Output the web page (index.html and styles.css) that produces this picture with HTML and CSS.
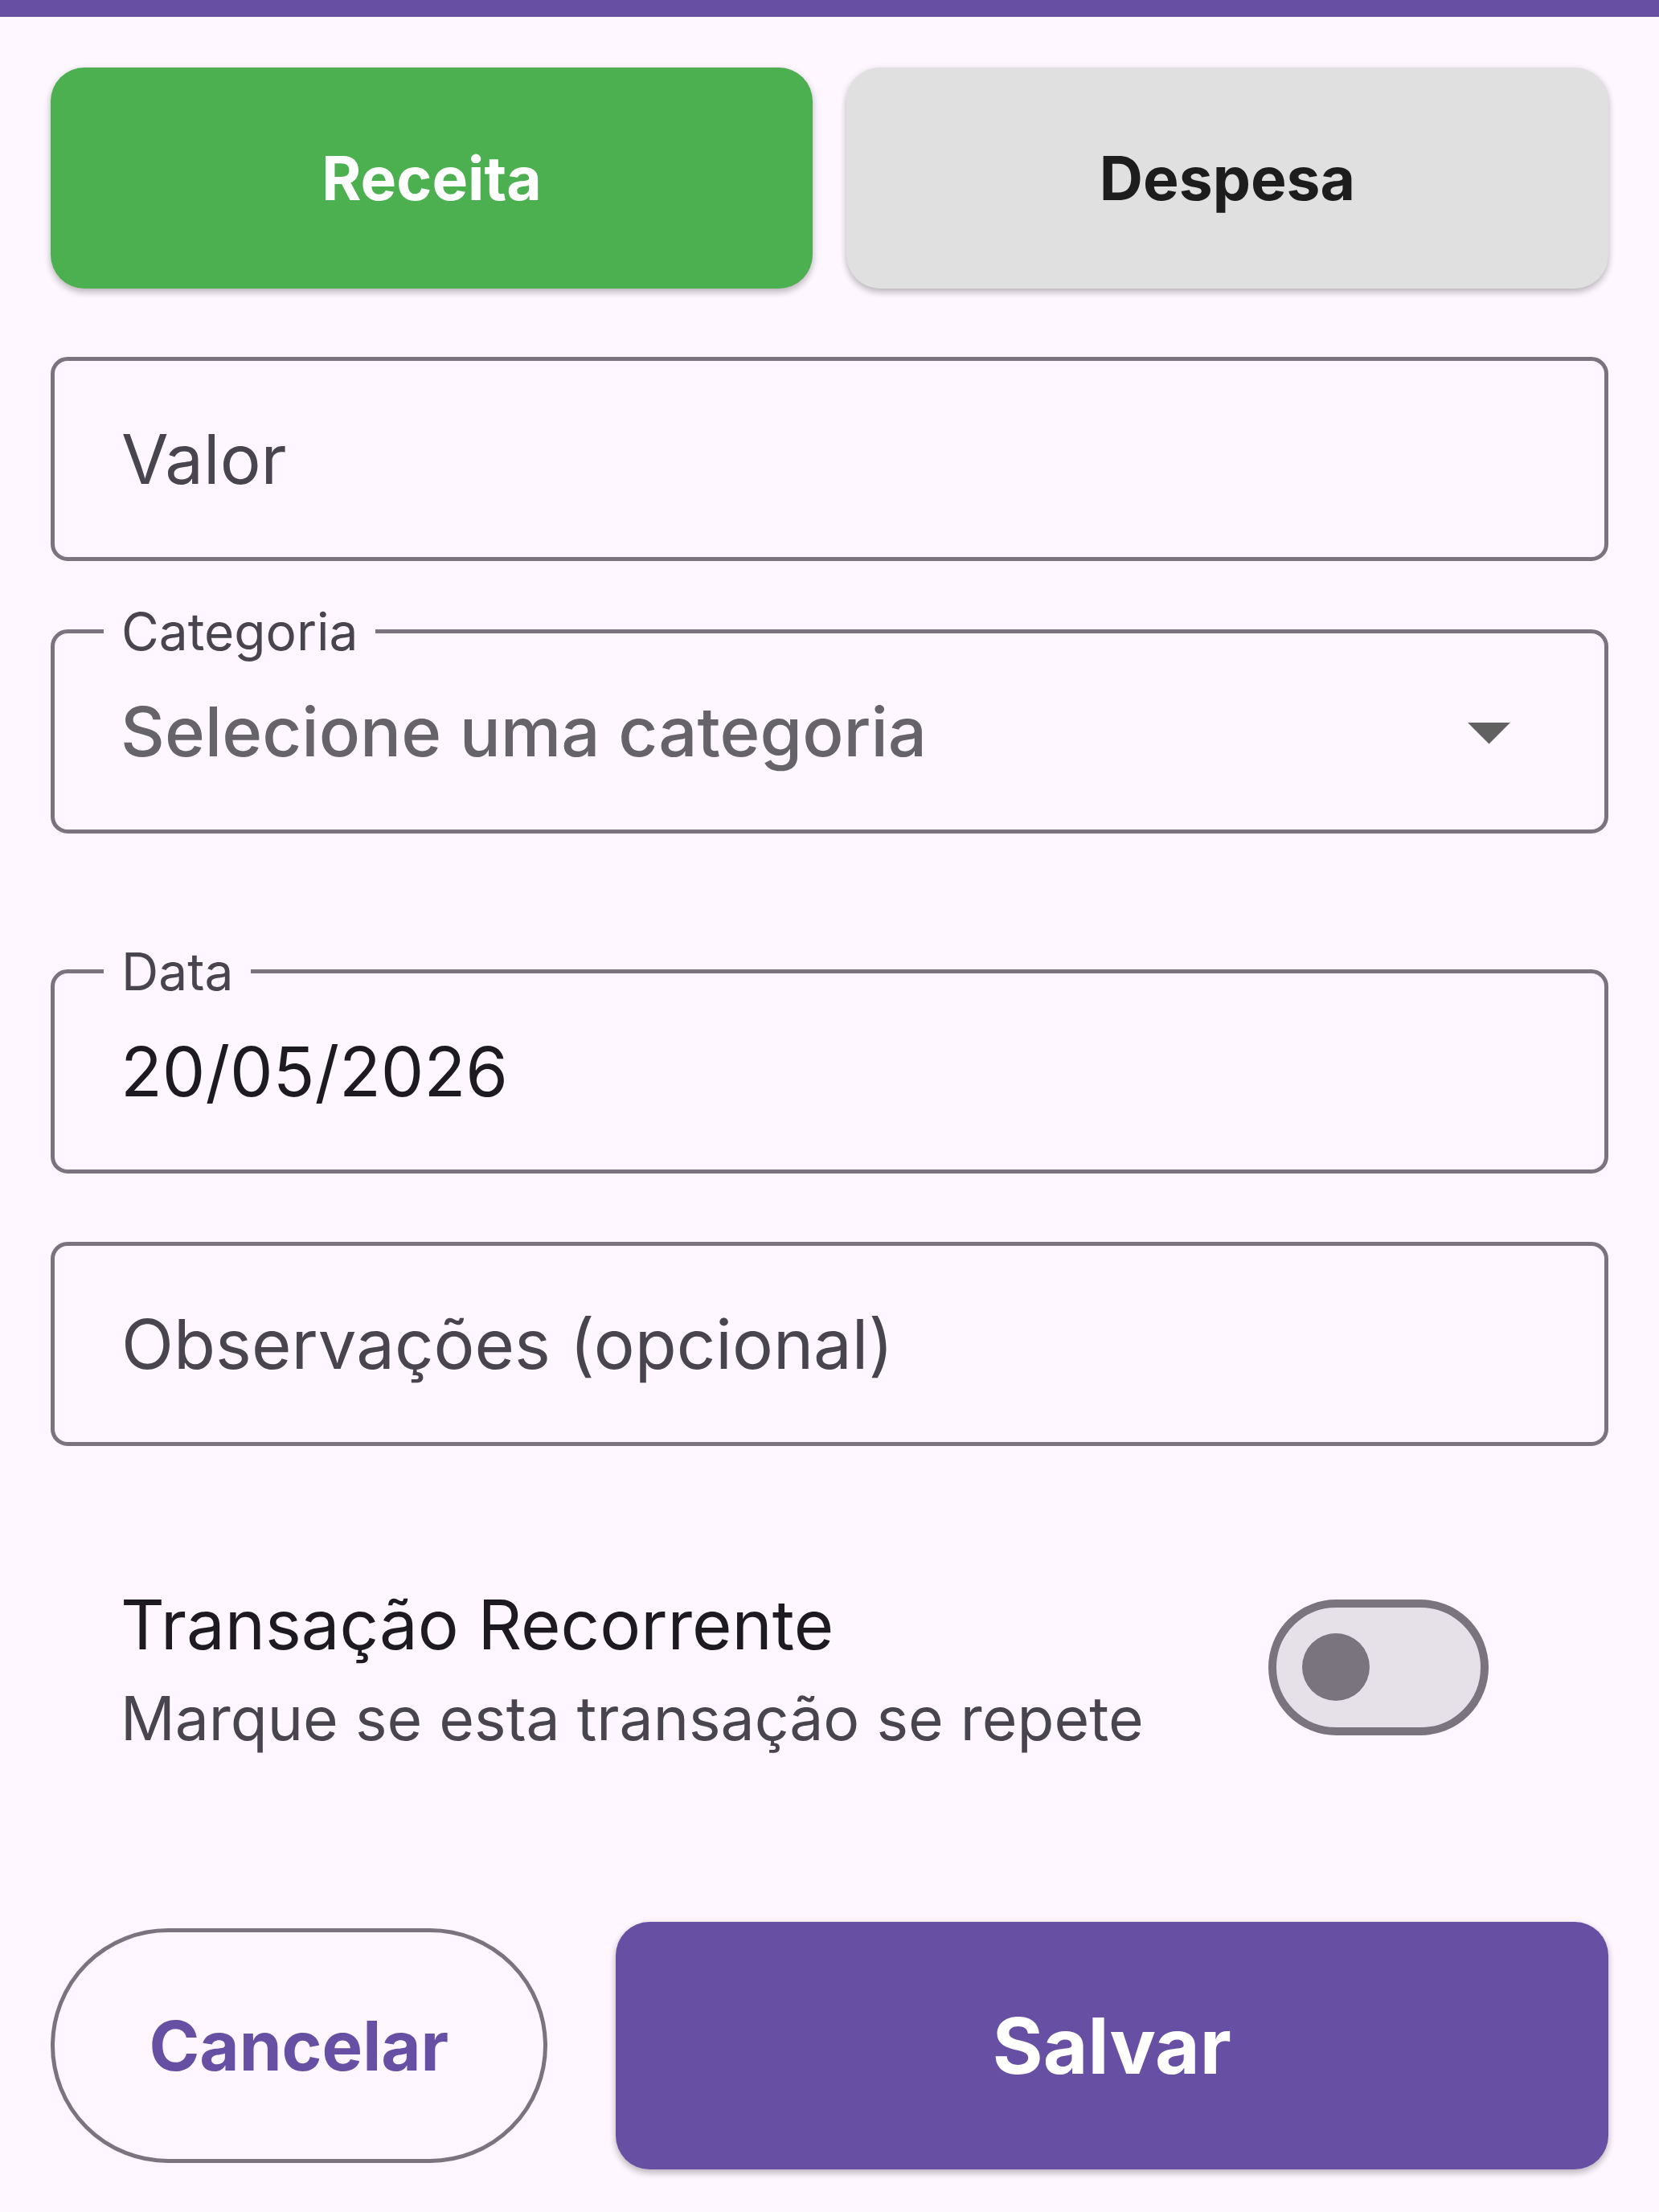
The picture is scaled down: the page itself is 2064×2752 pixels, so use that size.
FILE: index.html
```html
<!DOCTYPE html>
<html lang="pt-BR">
<head>
  <meta charset="utf-8">
  <meta name="viewport" content="width=device-width, initial-scale=1">
  <title>Nova transação</title>
  <link rel="stylesheet" href="styles.css">
</head>
<body>
  <header class="app-bar"></header>
  <main>
    <form class="form">
      <div class="type-picker">
        <button class="button button--income" type="button" aria-pressed="true">Receita</button>
        <button class="button button--expense" type="button" aria-pressed="false">Despesa</button>
      </div>

      <div class="field">
        <input class="field__control" id="valor" type="text" inputmode="decimal">
        <label class="field__label field__label--resting" for="valor">Valor</label>
      </div>

      <div class="field field--spaced">
        <select class="field__control field__control--select" id="categoria">
          <option>Selecione uma categoria</option>
        </select>
        <label class="field__label" for="categoria">Categoria</label>
        <svg class="field__arrow" viewBox="0 0 24 24" aria-hidden="true"><path d="M7 10l5 5 5-5z"/></svg>
      </div>

      <div class="field">
        <input class="field__control" id="data" type="text" value="20/05/2026" readonly>
        <label class="field__label" for="data">Data</label>
      </div>

      <div class="field">
        <input class="field__control" id="observacoes" type="text">
        <label class="field__label field__label--resting" for="observacoes">Observações (opcional)</label>
      </div>

      <div class="switch-row">
        <label class="switch-row__text" for="recorrente">
          <span class="switch-row__title">Transação Recorrente</span>
          <span class="switch-row__subtitle">Marque se esta transação se repete</span>
        </label>
        <input class="switch" id="recorrente" type="checkbox" role="switch">
      </div>

      <div class="actions">
        <button class="button button--cancel" type="button">Cancelar</button>
        <button class="button button--save" type="submit">Salvar</button>
      </div>
    </form>
  </main>
</body>
</html>
```
FILE: styles.css
```css
:root {
  --primary: #6750a4;
  --surface: #fef7ff;
  --on-surface: #1d1b20;
  --on-surface-variant: #49454f;
  --outline: #79747e;
  --text-s: 64px;
  --text-m: 75px;
  --text-l: 85px;
  --text-xl: 96px;
  --shadow: 0 5px 8px rgba(0, 0, 0, 0.2), 0 2px 10px rgba(0, 0, 0, 0.1);
}

* {
  box-sizing: border-box;
}

body {
  margin: 0;
  background: var(--surface);
  color: var(--on-surface);
  font-family: Inter, "Liberation Sans", sans-serif;
}

button,
input,
select {
  font: inherit;
}

.app-bar {
  height: 21px;
  background: var(--primary);
}

.form {
  display: flex;
  flex-direction: column;
  gap: 85px;
  padding: 63px 63px 52px;
}

.type-picker {
  display: grid;
  grid-template-columns: 1fr 1fr;
  gap: 42px;
}

/* Buttons */

.button {
  margin: 0;
  padding: 0;
  border: 0;
  border-radius: 42px;
  font-weight: 700;
}

.button--income,
.button--expense {
  height: 275px;
  font-size: var(--text-m);
  box-shadow: var(--shadow);
}

.button--income {
  background: #4caf50;
  color: #fff;
}

.button--expense {
  background: #e0e0e0;
  color: #1d1d1d;
}

.button--cancel {
  height: 292px;
  border: 5px solid var(--outline);
  border-radius: 146px;
  background: transparent;
  color: var(--primary);
  font-size: var(--text-l);
}

.button--save {
  height: 308px;
  background: var(--primary);
  color: #fff;
  font-size: var(--text-xl);
  box-shadow: var(--shadow);
}

/* Outlined fields */

.field {
  position: relative;
}

.field--spaced {
  margin-bottom: 84px;
}

.field__control {
  display: block;
  width: 100%;
  height: 254px;
  margin: 0;
  padding: 0 82px;
  border: 5px solid var(--outline);
  border-radius: 21px;
  background: transparent;
  color: var(--on-surface);
  font-size: var(--text-l);
}

.field__control--select {
  appearance: none;
  padding-right: 212px;
  color: #666468;
  font-weight: 500;
}

.field__label {
  position: absolute;
  top: -44px;
  left: 66px;
  padding: 0 22px;
  background: var(--surface);
  color: var(--on-surface-variant);
  font-size: var(--text-s);
  line-height: 94px;
}

.field__label--resting {
  top: 64px;
  font-size: var(--text-l);
  line-height: 127px;
}

.field__arrow {
  position: absolute;
  top: 63px;
  right: 85px;
  width: 127px;
  height: 127px;
  fill: #616161;
  pointer-events: none;
}

/* Recurring switch */

.switch-row {
  display: flex;
  align-items: center;
  justify-content: space-between;
  min-height: 380px;
  margin-bottom: -85px;
  padding: 0 149px 0 87px;
}

.switch-row__text {
  display: flex;
  flex-direction: column;
}

.switch-row__title {
  font-size: var(--text-l);
  line-height: 127px;
}

.switch-row__subtitle {
  color: var(--on-surface-variant);
  font-size: var(--text-m);
  line-height: 106px;
}

.switch {
  display: flex;
  flex: none;
  align-items: center;
  appearance: none;
  width: 274px;
  height: 169px;
  margin: 0;
  padding: 0 32px;
  border: 10px solid var(--outline);
  border-radius: 85px;
  background: #e6e0e9;
}

.switch::before {
  content: "";
  width: 84px;
  height: 84px;
  border-radius: 50%;
  background: var(--outline);
}

.switch:checked {
  justify-content: flex-end;
  border-color: var(--primary);
  background: var(--primary);
}

.switch:checked::before {
  background: #fff;
}

/* Footer actions */

.actions {
  display: grid;
  grid-template-columns: 1fr 2fr;
  align-items: center;
  gap: 85px;
  padding-top: 127px;
}
```
